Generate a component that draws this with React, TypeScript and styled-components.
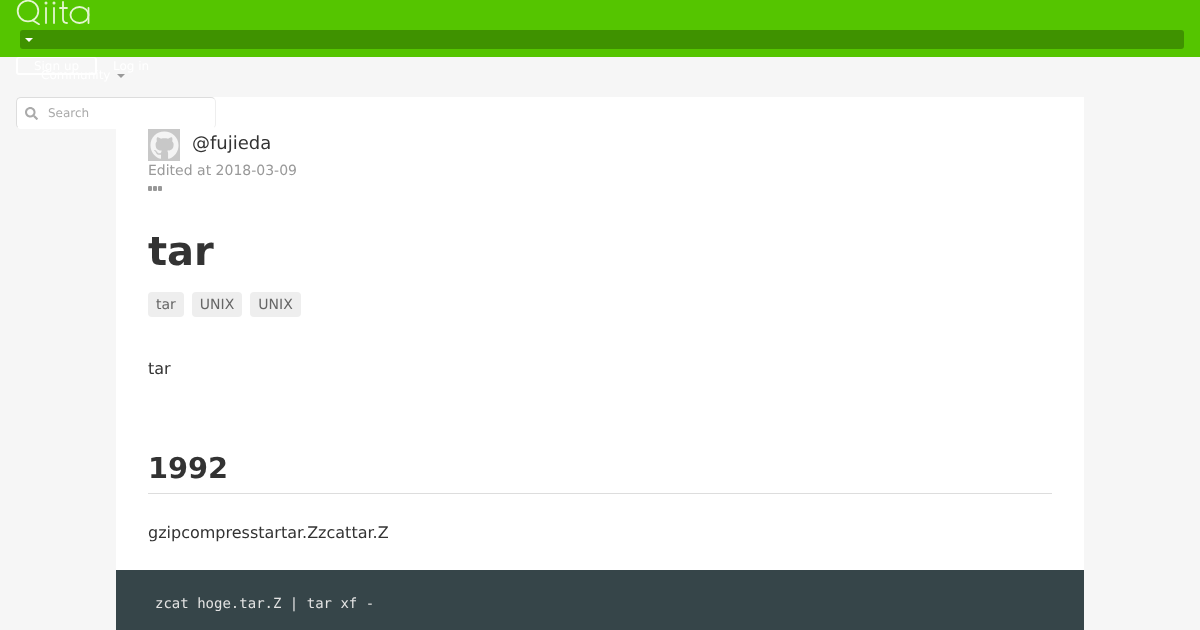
import React from "react";
import styled, { createGlobalStyle } from "styled-components";
import { FaGithub, FaSearch } from "react-icons/fa";

const Global = createGlobalStyle`
  html, body { margin: 0; padding: 0; background: #f6f6f6; overflow: hidden; }
  body { font-family: "DejaVu Sans", sans-serif; color: #333; text-rendering: geometricPrecision; }
  * { box-sizing: border-box; }
`;

const Page = styled.div`
  position: relative;
  width: 1200px;
  height: 630px;
  overflow: hidden;
  will-change: transform;
`;

const Header = styled.header`
  height: 57px;
  background: #55c500;
  padding: 0 16px 0 20px;
  display: flex;
  flex-direction: column;
  gap: 5px;
`;

const LogoSvg = styled.svg`
  display: block;
  width: 76px;
  height: 25px;
  margin-left: -4px;
`;

const DropBar = styled.div`
  height: 19px;
  background: #3f9200;
  border-radius: 3px;
  padding: 0 5px;
  display: flex;
  align-items: center;
`;

const Caret = styled.span<{ $color: string }>`
  display: inline-block;
  width: 0;
  height: 0;
  border-left: 4px solid transparent;
  border-right: 4px solid transparent;
  border-top: 4px solid ${(p) => p.$color};
`;

const HeaderOverflow = styled.div`
  position: absolute;
  left: 16px;
  top: 57px;
  width: 140px;
  height: 30px;
  color: #fff;
  font-size: 12px;
`;

const SignUp = styled.a`
  position: absolute;
  left: 0;
  top: 0;
  width: 81px;
  height: 18px;
  border: 2px solid #fff;
  border-top-width: 1px;
  border-radius: 3px;
  text-align: center;
  line-height: 17px;
`;

const LogIn = styled.a`
  position: absolute;
  left: 97px;
  top: 2px;
  line-height: 15px;
`;

const Community = styled.span`
  position: absolute;
  left: 25px;
  top: 11px;
  display: flex;
  align-items: center;
  gap: 7px;
  line-height: 15px;
`;

const SearchBox = styled.div`
  position: absolute;
  left: 16px;
  top: 97px;
  width: 200px;
  height: 32px;
  background: #fff;
  border: 1px solid #ddd;
  border-bottom-color: #fff;
  border-right-color: #eee;
  border-radius: 5px;
  display: flex;
  align-items: center;
  gap: 10px;
  padding-left: 8px;
  color: #aaa;
  font-size: 12px;
`;

const Article = styled.main`
  width: 968px;
  margin: 40px auto 0;
  background: #fff;
  padding: 32px 32px 0;
`;

const AuthorRow = styled.div`
  display: flex;
  align-items: center;
  gap: 12px;
  height: 32px;
`;

const Avatar = styled.div`
  width: 32px;
  height: 32px;
  background: #c8c8c8;
  display: flex;
  align-items: center;
  justify-content: center;
  color: #f4f4f4;
  font-size: 29px;
`;

const AuthorName = styled.span`
  font-size: 18px;
  color: #333;
  line-height: 28px;
  margin-top: -2px;
`;

const Edited = styled.div`
  font-size: 14px;
  color: #999;
  line-height: 18px;
  padding-top: 1px;
  height: 18px;
  box-sizing: content-box;
`;

const Dots = styled.div`
  display: flex;
  gap: 1px;
  margin-top: 6px;
`;

const Dot = styled.i`
  display: block;
  width: 4px;
  height: 5px;
  background: #999;
  border-radius: 1px;
`;

const Title = styled.h1`
  margin: 31px 0 0;
  font-size: 40px;
  line-height: 60px;
  font-weight: 700;
  color: #333;
`;

const Tags = styled.div`
  display: flex;
  gap: 8px;
  margin-top: 10px;
`;

const Tag = styled.span`
  height: 25px;
  padding: 0 8px;
  background: #eee;
  border-radius: 4px;
  font-size: 14px;
  line-height: 27px;
  color: #666;
`;

const Para = styled.p<{ $top: number }>`
  margin: ${(p) => p.$top}px 0 0;
  font-size: 16px;
  line-height: 24px;
  color: #333;
`;

const H2 = styled.h2`
  margin: 64px 0 0;
  height: 45px;
  font-size: 28.8px;
  line-height: 47px;
  font-weight: 700;
  color: #333;
  border-bottom: 1px solid #ddd;
  box-sizing: content-box;
  padding-bottom: 3px;
`;

const Code = styled.pre`
  margin: 25px -32px 0;
  height: 120px;
  background: #364549;
  padding: 25px 39px;
  font-family: "DejaVu Sans Mono", monospace;
  font-size: 14px;
  line-height: 18px;
  color: #e3e3e3;
`;

export default function App() {
  return (
    <Page>
      <Global />
      <Header>
        <LogoSvg viewBox="0 0 76 25" fill="none" stroke="#e4f6d0" strokeWidth="1.8" strokeLinecap="round">
          <circle cx="12" cy="11" r="10.3" />
          <path d="M17 20.5 L23 24.2" />
          <path d="M30 8 V23" />
          <circle cx="30" cy="3" r="0.6" />
          <path d="M38 8 V23" />
          <circle cx="38" cy="3" r="0.6" />
          <path d="M47 2 V19 Q47 23 51 23 M44 8 H51" />
          <ellipse cx="63.5" cy="15" rx="9" ry="8" />
          <path d="M72.5 8 V23" />
        </LogoSvg>
        <DropBar>
          <Caret $color="#fff" />
        </DropBar>
      </Header>
      <HeaderOverflow>
        <SignUp>Sign up</SignUp>
        <LogIn>Log in</LogIn>
        <Community>
          Community <Caret $color="#999" />
        </Community>
      </HeaderOverflow>
      <Article>
        <AuthorRow>
          <Avatar>
            <FaGithub />
          </Avatar>
          <AuthorName>@fujieda</AuthorName>
        </AuthorRow>
        <Edited>Edited at 2018-03-09</Edited>
        <Dots>
          <Dot />
          <Dot />
          <Dot />
        </Dots>
        <Title>tar</Title>
        <Tags>
          <Tag>tar</Tag>
          <Tag>UNIX</Tag>
          <Tag>UNIX</Tag>
        </Tags>
        <Para $top={40}>tar</Para>
        <H2>1992</H2>
        <Para $top={27}>gzipcompresstartar.Zzcattar.Z</Para>
        <Code>zcat hoge.tar.Z | tar xf -</Code>
      </Article>
      <SearchBox>
        <FaSearch size={13} />
        <span>Search</span>
      </SearchBox>
    </Page>
  );
}
